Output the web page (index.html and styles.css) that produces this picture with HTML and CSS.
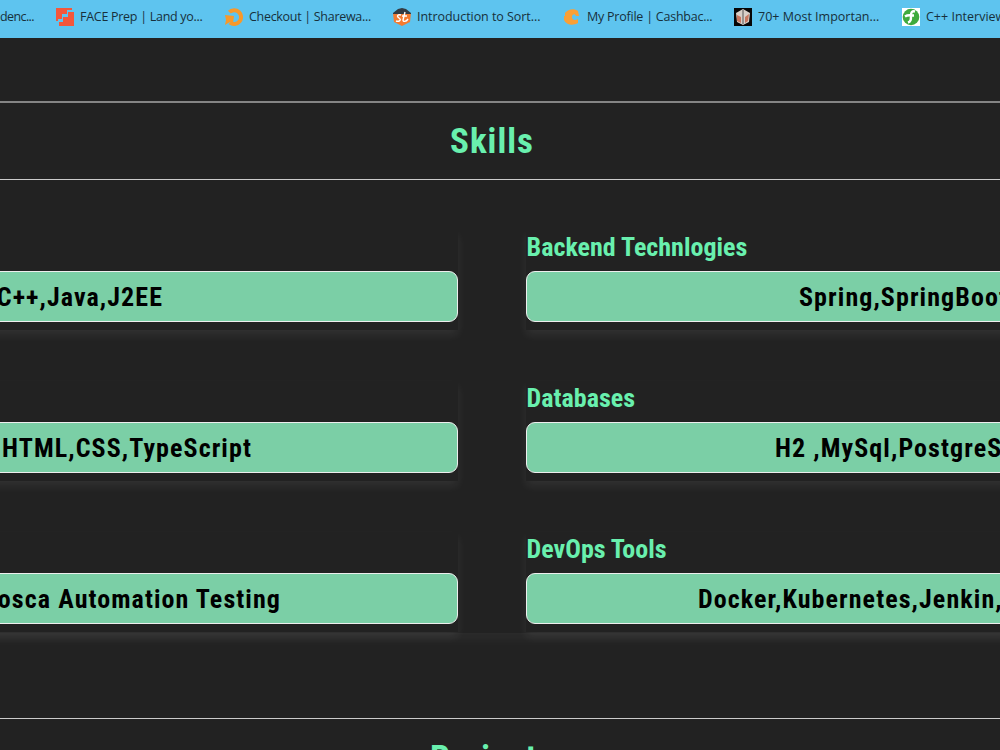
FILE: index.html
```
<!DOCTYPE html>
<html lang="en">
<head>
    <meta charset="utf-8">
    <title>Skills</title>
    <link rel="stylesheet" href="styles.css">
</head>
<body>
    <nav class="bookmarks">
        <div class="bookmark first"><span class="label">denc...</span></div>
        <div class="bookmark face">
            <svg class="icon" viewBox="0 0 18 18"><path fill="#f4573b" d="M0 0h16v2h-5v4H6v5H2v2H0zM18 4v14H3v-4h4V9h5V4z"/></svg>
            <span class="label">FACE Prep | Land yo...</span>
        </div>
        <div class="bookmark checkout">
            <svg class="icon" viewBox="0 0 18 18"><path fill="none" stroke="#f7992b" stroke-width="4" d="M4.3 4.2A6.9 6.9 0 1 1 5 14.6"/><path fill="#f7992b" d="M0 7l9 1-1 7-3-1-5 3 1-5z"/></svg>
            <span class="label">Checkout | Sharewa...</span>
        </div>
        <div class="bookmark intro">
            <svg class="icon" viewBox="0 0 18 18"><path fill="#f47b30" d="M0 5h18l-1 9-8 4-8-4z"/><path fill="#333c43" d="M0 5l5-4 4-1 4 1 5 4v1H0z"/><path fill="none" stroke="#fff" stroke-width="1.4" d="M8 7C5 6 3 8 6 10s0 4-3 3M12 4l-2 8c0 2 3 2 5-1M9 8h5"/></svg>
            <span class="label">Introduction to Sort...</span>
        </div>
        <div class="bookmark profile">
            <svg class="icon" viewBox="0 0 18 18"><path fill="#faa036" d="M15 3C11 0 5 1 2 5v3H1v4c2 5 9 6 14 3v-4c-3 2-6 1-6-2s3-4 4-1h3z"/></svg>
            <span class="label">My Profile | Cashbac...</span>
        </div>
        <div class="bookmark important">
            <svg class="icon" viewBox="0 0 18 18"><path fill="#070606" d="M0 0h18v18H0z"/><path fill="#d9d0c8" d="M2 5l7-4 7 4-1 9-6 3-6-3z"/><path fill="#c8775f" d="M3 7l4 2v6l-4-2zM11 9l4-3-1 7-3 2z"/><path stroke="#555" d="M9 2v14" fill="none"/></svg>
            <span class="label">70+ Most Importan...</span>
        </div>
        <div class="bookmark cpp">
            <svg class="icon" viewBox="0 0 18 18"><path fill="#fff" d="M0 0h18v18H0z"/><circle cx="9" cy="9" r="8.3" fill="#3faa3d"/><path fill="none" stroke="#fff" stroke-width="2.4" d="M3 8.5c3-2 5-1 9-1M13 3.5c-3-1-4 1-4 4 0 4 0 6-3 7"/></svg>
            <span class="label">C++ Interview</span>
        </div>
    </nav>

    <header class="section-title">
        <h1>Skills</h1>
    </header>

    <main class="skills">
        <div class="row">
            <section class="card left">
                <h2>&nbsp;</h2>
                <div class="pill core"><span>C++,Java,J2EE</span></div>
            </section>
            <section class="card">
                <h2>Backend Technlogies</h2>
                <div class="pill backend"><span>Spring,SpringBoot</span></div>
            </section>
        </div>
        <div class="row">
            <section class="card left">
                <h2>&nbsp;</h2>
                <div class="pill frontend"><span>HTML,CSS,TypeScript</span></div>
            </section>
            <section class="card">
                <h2>Databases</h2>
                <div class="pill databases"><span>H2 ,MySql,PostgreSql</span></div>
            </section>
        </div>
        <div class="row">
            <section class="card left">
                <h2>&nbsp;</h2>
                <div class="pill testing"><span>Tosca Automation Testing</span></div>
            </section>
            <section class="card">
                <h2>DevOps Tools</h2>
                <div class="pill devops"><span>Docker,Kubernetes,Jenkin,Git</span></div>
            </section>
        </div>
    </main>

    <header class="section-title projects">
        <h1>Projects</h1>
    </header>
</body>
</html>
```
FILE: styles.css
```
* {
    box-sizing: border-box;
}
body {
    margin: 0;
    height: 750px;
    overflow: hidden;
    background: #222222;
    color: #69f0ae;
    font-family: "Roboto Condensed", Roboto, sans-serif;
    font-stretch: 75%;
}
.bookmarks {
    display: flex;
    height: 38px;
    padding-bottom: 5px;
    align-items: center;
    background: #5ec4ef;
    overflow: hidden;
}
.bookmark {
    display: flex;
    flex: none;
    align-items: center;
    gap: 6px;
    color: #17303b;
    font-family: "Open Sans", "Noto Sans", sans-serif;
    font-size: 12.5px;
    font-stretch: 100%;
    white-space: nowrap;
}
.first { width: 56px; letter-spacing: -0.6px; }
.face { width: 169px; letter-spacing: -0.28px; }
.checkout { width: 168px; letter-spacing: -0.3px; }
.intro { width: 170px; letter-spacing: -0.05px; }
.profile { width: 171px; letter-spacing: -0.23px; }
.important { width: 168px; }
.icon {
    width: 18px;
    height: 18px;
    flex: none;
}
.section-title {
    height: 79px;
    margin-top: 63px;
    border-top: 2px solid #858585;
    border-bottom: 1px solid #cccccc;
    padding: 18px 0 0 450px;
}
h1 {
    margin: 0;
    font-size: 35px;
    line-height: 42px;
    letter-spacing: 1px;
    white-space: nowrap;
}
.skills {
    height: 453px;
    margin: 0 -30px;
    padding: 50px 30px 0;
    box-shadow: 0 4px 14px rgba(255,255,255,0.06);
    clip-path: inset(50px 0 -30px 0);
}
.row {
    display: flex;
    gap: 68px;
    margin: 0 0 51px -30px;
}
.card {
    flex: none;
    width: 526px;
    height: 100px;
    box-shadow: 0 5px 9px rgba(255,255,255,0.07);
}
.left {
    width: 488px;
}
h2 {
    margin: 0;
    height: 41px;
    padding-left: 0.6px;
    font-size: 26px;
    line-height: 34px;
    white-space: nowrap;
}
.pill {
    height: 51px;
    border: 1px solid #eeeeee;
    border-radius: 9px;
    background: #7bcfa6;
    color: #000;
    font-size: 26px;
    font-weight: bold;
    letter-spacing: 1.08px;
    line-height: 50px;
    white-space: nowrap;
    overflow: hidden;
}
.left .pill {
    display: flex;
    justify-content: flex-end;
}
.core { padding-right: 294px; }
.frontend { padding-right: 205px; }
.testing { padding-right: 176px; }
.backend { padding-left: 272px; }
.databases { padding-left: 248px; }
.devops { padding-left: 171px; }
.projects {
    margin-top: 85px;
    border-top: 1px solid #cccccc;
    padding-left: 430px;
}
.projects h1 {
    font-size: 35px;
    line-height: 43px;
}
```
